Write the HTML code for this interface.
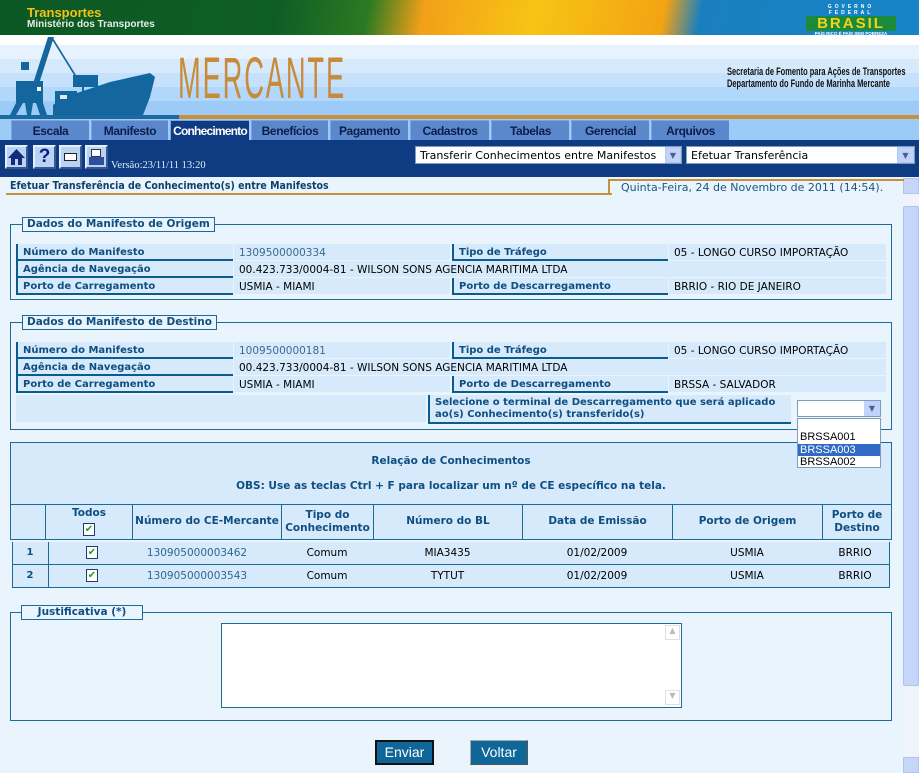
<!DOCTYPE html>
<html><head><meta charset="utf-8">
<style>
*{margin:0;padding:0;box-sizing:border-box}
body{width:919px;height:773px;overflow:hidden;background:#eaf4fd;font-family:"DejaVu Sans","Liberation Sans",sans-serif;font-size:11px;color:#000;position:relative}
.a{position:absolute}
.lbl{position:absolute;background:#d6eafc;border-left:2px solid #0b5c8c;border-bottom:2px solid #0b5c8c;color:#0e4e80;font-weight:bold;font-size:10px;padding:3px 0 0 5px;height:17px;white-space:nowrap}
.val{position:absolute;background:#d6eafc;padding:3px 0 0 5px;height:16px;white-space:nowrap;font-size:10.5px}
.fs{position:absolute;border:1px solid #1b6a98}
.lg{position:absolute;background:#eaf4fd;border:1px solid #1b6a98;color:#0e4e80;font-weight:bold;font-size:10.5px;padding:0 4px;height:15px;line-height:13px;white-space:nowrap}
.tab{position:absolute;top:120px;height:20px;background:#5b87cc;color:#0b1e4a;font-family:"Liberation Sans",sans-serif;font-weight:bold;font-size:12px;letter-spacing:-0.4px;text-align:center;line-height:21px;border-top:1px solid #7ea4de;border-left:1px solid #7ea4de;white-space:nowrap;overflow:hidden}
.ico{position:absolute;top:145px;width:23px;height:24px;background:#b9d3f5;border:2px solid #e4eefc;border-right-color:#3a5790;border-bottom-color:#3a5790}
.th{position:absolute;top:504px;height:35px;border-left:1px solid #1b6a98;color:#0e4e80;font-weight:bold;font-size:10.5px;text-align:center;display:flex;align-items:center;justify-content:center;line-height:13px}
.td{position:absolute;text-align:center;font-size:10.5px}
.cb{display:inline-block;width:12px;height:13px;border:1px solid #1c3f6c;background:#fff;color:#22a02a;font-size:10px;line-height:11px;text-align:center;font-weight:bold}
</style></head><body>
<!-- top banner -->
<div class="a" style="left:0;top:0;width:919px;height:35px;background:linear-gradient(100deg,#0c5824 0%,#0f5d26 30%,#2b7a22 40%,#f2a019 46%,#f7c414 58%,#f4a313 72%,#1a7fbe 76%,#1585c7 100%)"></div>
<div class="a" style="left:27px;top:6px;color:#f2c21a;font-family:'Liberation Sans',sans-serif;font-weight:bold;font-size:13px;line-height:14px">Transportes</div>
<div class="a" style="left:27px;top:19px;color:#e6efe6;font-family:'Liberation Sans',sans-serif;font-weight:bold;font-size:10px;line-height:11px">Ministério dos Transportes</div>
<div class="a" style="left:806px;top:4px;width:90px;height:28px;text-align:center;font-family:'Liberation Sans',sans-serif">
<div style="color:#fff;font-size:5px;font-weight:bold;letter-spacing:3px;line-height:6px">GOVERNO FEDERAL</div>
<div style="color:#f5d21a;background:#1b8a3a;font-size:15px;font-weight:900;line-height:15px;letter-spacing:2px">BRASIL</div>
<div style="color:#fff;font-size:4.5px;font-weight:bold;line-height:6px">PAÍS RICO É PAÍS SEM POBREZA</div></div>
<!-- header -->
<div class="a" style="left:0;top:35px;width:919px;height:80px;background:linear-gradient(#ffffff 0,#ffffff 10px,#e6f2fd 10px,#e6f2fd 24px,#d6eafc 24px,#d6eafc 38px,#c5e1fb 38px,#c5e1fb 52px,#b1d7fa 52px,#b1d7fa 66px,#9ccbf8 66px)"></div>
<svg class="a" style="left:0;top:35px" width="180" height="80" viewBox="0 0 180 80">
<g fill="#14679e">
<polygon points="48,2 54,2 36,58 30,58"/>
<polygon points="51,3 53,3 76,40 74,40"/>
<rect x="73" y="40" width="25" height="12"/>
<rect x="21" y="27" width="8" height="8"/>
<rect x="16" y="46" width="27" height="22"/>
<polygon points="16,68 23,68 16,80 10,80"/>
<polygon points="36,68 43,68 47,80 40,80"/>
<polygon points="25,68 33,68 31,80 27,80"/>
<polygon points="53,70 62,63 110,47 150,38 155,42 150,62 143,80 53,80"/>
<rect x="55" y="56" width="22" height="14"/>
<rect x="82" y="46" width="2" height="12"/>
</g>
<rect x="37" y="52" width="4" height="4" fill="#fff"/>
<rect x="60" y="60" width="7" height="4" fill="#dbe9f6"/>
</svg>
<div class="a" style="left:178px;top:48px;color:#c98b3a;font-family:'Liberation Sans',sans-serif;font-size:58px;letter-spacing:4px;transform:scaleX(0.47);transform-origin:0 0;line-height:62px">MERCANTE</div>
<div class="a" style="left:727px;top:66px;font-family:'Liberation Sans',sans-serif;font-weight:bold;font-size:11px;line-height:12px;transform:scaleX(0.68);transform-origin:0 0;white-space:nowrap;color:#111">Secretaria de Fomento para Ações de Transportes<br>Departamento do Fundo de Marinha Mercante</div>
<div class="a" style="left:0;top:115px;width:179px;height:4px;background:#1a6aa0"></div>
<div class="a" style="left:179px;top:115px;width:740px;height:4px;background:#c8903a"></div>
<div class="a" style="left:0;top:119px;width:919px;height:21px;background:#9ccbf8"></div>
<div class="tab" style="left:11px;width:78px">Escala</div>
<div class="tab" style="left:91px;width:77px">Manifesto</div>
<div class="tab" style="left:170px;width:79px;background:#0f3b83;color:#fff;letter-spacing:-0.8px">Conhecimento</div>
<div class="tab" style="left:251px;width:77px">Benefícios</div>
<div class="tab" style="left:330px;width:78px">Pagamento</div>
<div class="tab" style="left:410px;width:79px">Cadastros</div>
<div class="tab" style="left:491px;width:78px">Tabelas</div>
<div class="tab" style="left:571px;width:78px">Gerencial</div>
<div class="tab" style="left:651px;width:78px">Arquivos</div>
<!-- toolbar -->
<div class="a" style="left:0;top:140px;width:919px;height:37px;background:#0f3b83"></div>
<div class="ico" style="left:5px"><svg width="19" height="20"><polygon points="9.5,2 1,11 4,11 4,18 15,18 15,11 18,11" fill="#142a7a"/><rect x="8" y="12" width="3" height="6" fill="#b9d3f5"/></svg></div>
<div class="ico" style="left:33px;color:#101a80;font:bold 19px 'Liberation Sans';text-align:center;line-height:20px">?</div>
<div class="ico" style="left:59px"><div style="margin:6px 3px;width:13px;height:8px;border:1px solid #222;background:#fff"></div></div>
<div class="ico" style="left:85px"><div style="margin:2px 4px 0;width:10px;height:8px;background:#fff;border:1px solid #335"></div><div style="margin:0 2px;width:15px;height:8px;background:#2d4fa0"></div></div>
<div class="a" style="left:111px;top:160px;color:#e2ecf8;font-family:'Liberation Serif',serif;font-size:10.5px">Versão:23/11/11 13:20</div>
<div class="a" style="left:415px;top:146px;width:267px;height:18px;background:#fff;border:1px solid #7f9db9;padding:2px 4px;font-size:11px;white-space:nowrap;overflow:hidden">Transferir Conhecimentos entre Manifestos</div>
<div class="a" style="left:665px;top:147px;width:16px;height:16px;background:#c1d3fb;border:1px solid #b4c8f0;color:#4d6185;font-size:8px;text-align:center;line-height:15px">&#9660;</div>
<div class="a" style="left:686px;top:146px;width:229px;height:18px;background:#fff;border:1px solid #7f9db9;padding:2px 4px;font-size:11px">Efetuar Transferência</div>
<div class="a" style="left:897px;top:147px;width:17px;height:16px;background:#c1d3fb;border:1px solid #b4c8f0;color:#4d6185;font-size:8px;text-align:center;line-height:15px">&#9660;</div>
<!-- scrollbar -->
<div class="a" style="left:903px;top:177px;width:16px;height:596px;background:#eef3fc"></div>
<div class="a" style="left:903px;top:178px;width:16px;height:16px;background:#c5d6f8;border:1px solid #b0c4ee"></div>
<div class="a" style="left:903px;top:206px;width:16px;height:480px;background:#c5d6fb;border:1px solid #aec2ee;border-radius:2px"></div>
<div class="a" style="left:903px;top:757px;width:16px;height:16px;background:#c5d6f8;border:1px solid #b0c4ee"></div>
<!-- title -->
<div class="a" style="left:10px;top:180px;color:#0e3f6a;font-weight:bold;font-size:10.5px;font-family:'DejaVu Sans Condensed','DejaVu Sans',sans-serif">Efetuar Transferência de Conhecimento(s) entre Manifestos</div>
<div class="a" style="left:6px;top:193px;width:606px;height:2px;background:#c8903a"></div>
<div class="a" style="left:608px;top:179px;width:296px;height:2px;background:#c8903a"></div>
<div class="a" style="left:608px;top:179px;width:2px;height:16px;background:#c8903a"></div>
<div class="a" style="left:621px;top:181px;color:#1b5784;font-size:11px">Quinta-Feira, 24 de Novembro de 2011 (14:54).</div>
<!-- fieldset 1 -->
<div class="fs" style="left:10px;top:224px;width:882px;height:76px"></div>
<div class="lg" style="left:22px;top:217px">Dados do Manifesto de Origem</div>
<div class="lbl" style="left:16px;top:244px;width:217px">Número do Manifesto</div>
<div class="val" style="left:234px;top:244px;width:216px;color:#3d6a8f">1309500000334</div>
<div class="lbl" style="left:452px;top:244px;width:216px">Tipo de Tráfego</div>
<div class="val" style="left:669px;top:244px;width:217px">05 - LONGO CURSO IMPORTAÇÃO</div>
<div class="lbl" style="left:16px;top:261px;width:217px">Agência de Navegação</div>
<div class="val" style="left:234px;top:261px;width:652px">00.423.733/0004-81 - WILSON SONS AGENCIA MARITIMA LTDA</div>
<div class="lbl" style="left:16px;top:278px;width:217px">Porto de Carregamento</div>
<div class="val" style="left:234px;top:278px;width:216px">USMIA - MIAMI</div>
<div class="lbl" style="left:452px;top:278px;width:216px">Porto de Descarregamento</div>
<div class="val" style="left:669px;top:278px;width:217px">BRRIO - RIO DE JANEIRO</div>
<!-- fieldset 2 -->
<div class="fs" style="left:10px;top:322px;width:882px;height:108px"></div>
<div class="lg" style="left:22px;top:315px">Dados do Manifesto de Destino</div>
<div class="lbl" style="left:16px;top:342px;width:217px">Número do Manifesto</div>
<div class="val" style="left:234px;top:342px;width:216px;color:#3d6a8f">1009500000181</div>
<div class="lbl" style="left:452px;top:342px;width:216px">Tipo de Tráfego</div>
<div class="val" style="left:669px;top:342px;width:217px">05 - LONGO CURSO IMPORTAÇÃO</div>
<div class="lbl" style="left:16px;top:359px;width:217px">Agência de Navegação</div>
<div class="val" style="left:234px;top:359px;width:652px">00.423.733/0004-81 - WILSON SONS AGENCIA MARITIMA LTDA</div>
<div class="lbl" style="left:16px;top:376px;width:217px">Porto de Carregamento</div>
<div class="val" style="left:234px;top:376px;width:216px">USMIA - MIAMI</div>
<div class="lbl" style="left:452px;top:376px;width:216px">Porto de Descarregamento</div>
<div class="val" style="left:669px;top:376px;width:217px">BRSSA - SALVADOR</div>
<div class="a" style="left:16px;top:395px;width:410px;height:27px;background:#d6eafc"></div>
<div class="lbl" style="left:428px;top:395px;width:363px;height:29px;line-height:12px;padding-top:2px;white-space:normal">Selecione o terminal de Descarregamento que será aplicado ao(s) Conhecimento(s) transferido(s)</div>
<div class="a" style="left:797px;top:400px;width:84px;height:17px;background:#fff;border:1px solid #7f9db9"></div>
<div class="a" style="left:864px;top:401px;width:16px;height:15px;background:#c1d3fb;color:#4d6185;font-size:8px;text-align:center;line-height:15px">&#9660;</div>
<!-- relacao -->
<div class="a" style="left:10px;top:442px;width:882px;height:98px;background:#d6eafc;border:1px solid #1b6a98"></div>
<div class="a" style="left:10px;top:455px;width:882px;text-align:center;color:#0e4e80;font-weight:bold;font-size:10.5px">Relação de Conhecimentos</div>
<div class="a" style="left:10px;top:480px;width:882px;text-align:center;color:#0e4e80;font-weight:bold;font-size:10.5px">OBS: Use as teclas Ctrl + F para localizar um nº de CE específico na tela.</div>
<div class="a" style="left:11px;top:504px;width:880px;height:1px;background:#1b6a98"></div>
<div class="th" style="left:45px;width:87px;flex-direction:column">Todos<span class="cb" style="margin-top:3px">&#10004;</span></div>
<div class="th" style="left:132px;width:149px">Número do CE-Mercante</div>
<div class="th" style="left:281px;width:92px">Tipo do<br>Conhecimento</div>
<div class="th" style="left:373px;width:149px">Número do BL</div>
<div class="th" style="left:522px;width:150px">Data de Emissão</div>
<div class="th" style="left:672px;width:150px">Porto de Origem</div>
<div class="th" style="left:822px;width:69px">Porto de<br>Destino</div>
<div class="a" style="left:12px;top:542px;width:878px;height:46px;background:#d6eafc;border:1px solid #1b6a98;border-top:none"></div>
<div class="a" style="left:12px;top:564px;width:878px;height:1px;background:#1b6a98"></div>
<div class="a" style="left:48px;top:542px;width:1px;height:46px;background:#1b6a98"></div>
<div class="td" style="left:12px;top:547px;width:36px;font-weight:bold;color:#0e4e80;font-size:10px">1</div>
<div class="td" style="left:12px;top:570px;width:36px;font-weight:bold;color:#0e4e80;font-size:10px">2</div>
<div class="td" style="left:86px;top:546px"><span class="cb">&#10004;</span></div>
<div class="td" style="left:86px;top:569px"><span class="cb">&#10004;</span></div>
<div class="td" style="left:132px;top:547px;width:130px;color:#2e6790">130905000003462</div>
<div class="td" style="left:132px;top:570px;width:130px;color:#2e6790">130905000003543</div>
<div class="td" style="left:281px;top:547px;width:92px">Comum</div>
<div class="td" style="left:281px;top:570px;width:92px">Comum</div>
<div class="td" style="left:373px;top:547px;width:149px">MIA3435</div>
<div class="td" style="left:373px;top:570px;width:149px">TYTUT</div>
<div class="td" style="left:522px;top:547px;width:150px">01/02/2009</div>
<div class="td" style="left:522px;top:570px;width:150px">01/02/2009</div>
<div class="td" style="left:672px;top:547px;width:150px">USMIA</div>
<div class="td" style="left:672px;top:570px;width:150px">USMIA</div>
<div class="td" style="left:822px;top:547px;width:66px">BRRIO</div>
<div class="td" style="left:822px;top:570px;width:66px">BRRIO</div>
<!-- dropdown list -->
<div class="a" style="left:797px;top:418px;width:84px;height:50px;background:#fff;border:1px solid #7f9db9;font-family:'Liberation Sans',sans-serif;font-size:11px;line-height:12.5px">
<div style="height:12px"></div><div style="padding-left:2px">BRSSA001</div><div style="padding-left:2px;background:#316ac5;color:#fff">BRSSA003</div><div style="padding-left:2px">BRSSA002</div></div>
<!-- justificativa -->
<div class="fs" style="left:10px;top:612px;width:882px;height:109px"></div>
<div class="lg" style="left:21px;top:605px;width:122px;text-align:center">Justificativa (*)</div>
<div class="a" style="left:221px;top:623px;width:461px;height:85px;background:#fff;border:1px solid #1b6a98"></div>
<div class="a" style="left:665px;top:625px;width:15px;height:15px;border:1px solid #e0e0e0;color:#bbb;font-size:8px;text-align:center">&#9650;</div>
<div class="a" style="left:665px;top:690px;width:15px;height:15px;border:1px solid #e0e0e0;color:#bbb;font-size:8px;text-align:center">&#9660;</div>
<div class="a" style="left:375px;top:740px;width:59px;height:25px;background:#0f6699;border:2px solid #111;color:#fff;font-family:'Liberation Sans',sans-serif;font-size:14px;text-align:center;line-height:21px">Enviar</div>
<div class="a" style="left:470px;top:740px;width:58px;height:25px;background:#0f6699;border:1px solid #aaa;border-right-color:#555;border-bottom-color:#555;color:#fff;font-family:'Liberation Sans',sans-serif;font-size:14px;text-align:center;line-height:23px">Voltar</div>
</body></html>
